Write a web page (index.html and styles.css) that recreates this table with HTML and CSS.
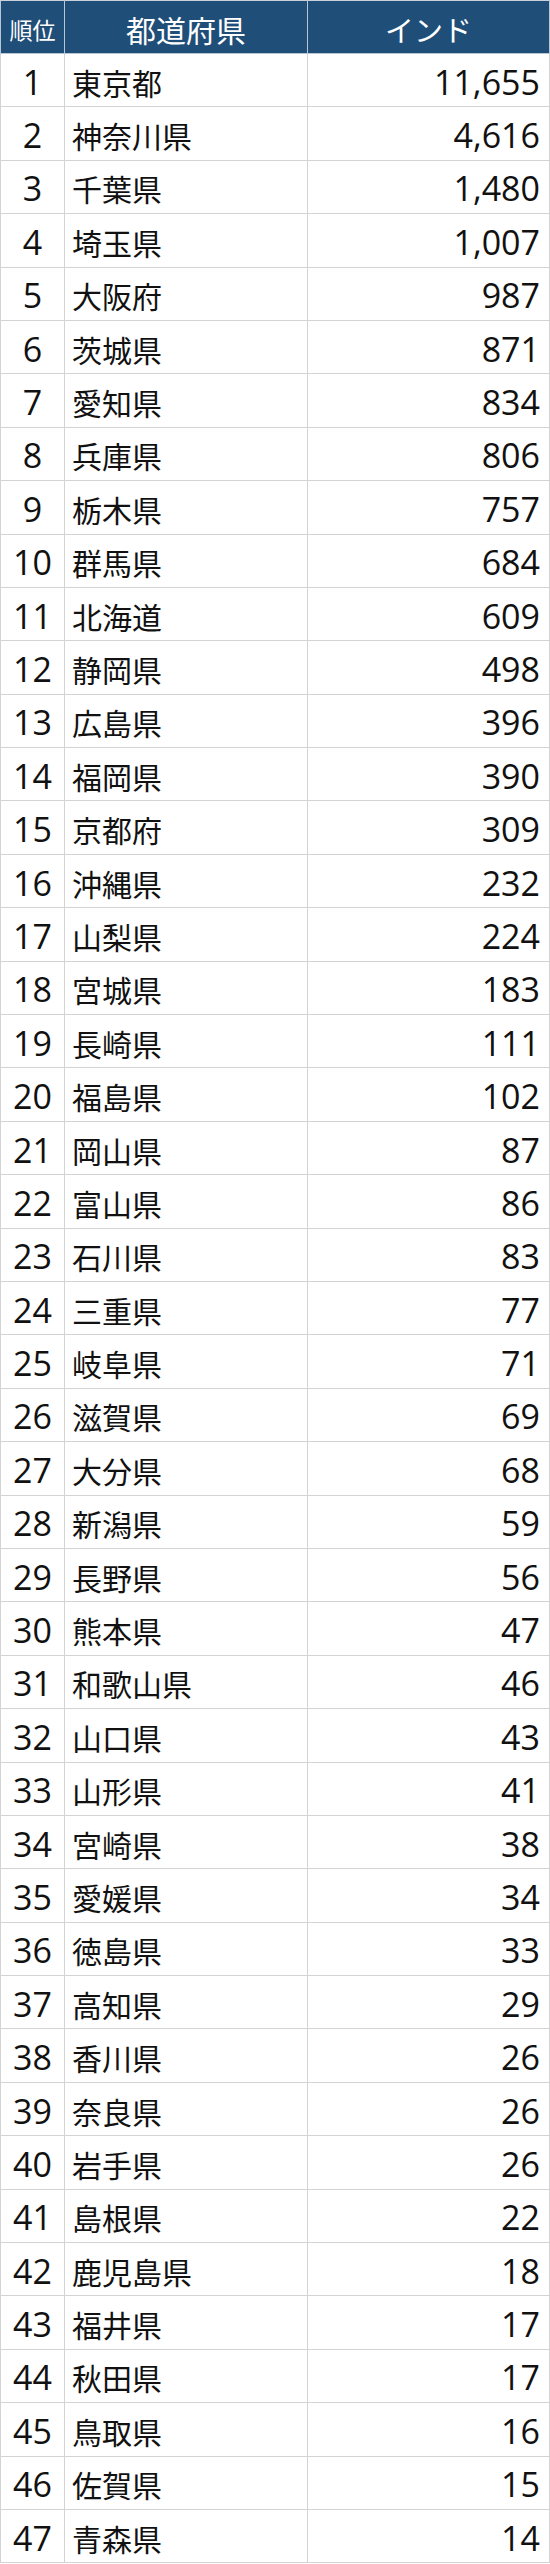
FILE: index.html
```html
<!DOCTYPE html>
<html lang="ja">
<head>
<meta charset="utf-8">
<title>順位表</title>
<link rel="stylesheet" href="styles.css">
</head>
<body>
<table class="rank-table">
<colgroup><col class="c-rank"><col class="c-name"><col class="c-num"></colgroup>
<thead>
<tr><th class="h-rank">順位</th><th class="h-name">都道府県</th><th class="h-num">インド</th></tr>
</thead>
<tbody>
<tr><td class="rank">1</td><td class="name">東京都</td><td class="num">11,655</td></tr>
<tr><td class="rank">2</td><td class="name">神奈川県</td><td class="num">4,616</td></tr>
<tr><td class="rank">3</td><td class="name">千葉県</td><td class="num">1,480</td></tr>
<tr><td class="rank">4</td><td class="name">埼玉県</td><td class="num">1,007</td></tr>
<tr><td class="rank">5</td><td class="name">大阪府</td><td class="num">987</td></tr>
<tr><td class="rank">6</td><td class="name">茨城県</td><td class="num">871</td></tr>
<tr><td class="rank">7</td><td class="name">愛知県</td><td class="num">834</td></tr>
<tr><td class="rank">8</td><td class="name">兵庫県</td><td class="num">806</td></tr>
<tr><td class="rank">9</td><td class="name">栃木県</td><td class="num">757</td></tr>
<tr><td class="rank">10</td><td class="name">群馬県</td><td class="num">684</td></tr>
<tr><td class="rank">11</td><td class="name">北海道</td><td class="num">609</td></tr>
<tr><td class="rank">12</td><td class="name">静岡県</td><td class="num">498</td></tr>
<tr><td class="rank">13</td><td class="name">広島県</td><td class="num">396</td></tr>
<tr><td class="rank">14</td><td class="name">福岡県</td><td class="num">390</td></tr>
<tr><td class="rank">15</td><td class="name">京都府</td><td class="num">309</td></tr>
<tr><td class="rank">16</td><td class="name">沖縄県</td><td class="num">232</td></tr>
<tr><td class="rank">17</td><td class="name">山梨県</td><td class="num">224</td></tr>
<tr><td class="rank">18</td><td class="name">宮城県</td><td class="num">183</td></tr>
<tr><td class="rank">19</td><td class="name">長崎県</td><td class="num">111</td></tr>
<tr><td class="rank">20</td><td class="name">福島県</td><td class="num">102</td></tr>
<tr><td class="rank">21</td><td class="name">岡山県</td><td class="num">87</td></tr>
<tr><td class="rank">22</td><td class="name">富山県</td><td class="num">86</td></tr>
<tr><td class="rank">23</td><td class="name">石川県</td><td class="num">83</td></tr>
<tr><td class="rank">24</td><td class="name">三重県</td><td class="num">77</td></tr>
<tr><td class="rank">25</td><td class="name">岐阜県</td><td class="num">71</td></tr>
<tr><td class="rank">26</td><td class="name">滋賀県</td><td class="num">69</td></tr>
<tr><td class="rank">27</td><td class="name">大分県</td><td class="num">68</td></tr>
<tr><td class="rank">28</td><td class="name">新潟県</td><td class="num">59</td></tr>
<tr><td class="rank">29</td><td class="name">長野県</td><td class="num">56</td></tr>
<tr><td class="rank">30</td><td class="name">熊本県</td><td class="num">47</td></tr>
<tr><td class="rank">31</td><td class="name">和歌山県</td><td class="num">46</td></tr>
<tr><td class="rank">32</td><td class="name">山口県</td><td class="num">43</td></tr>
<tr><td class="rank">33</td><td class="name">山形県</td><td class="num">41</td></tr>
<tr><td class="rank">34</td><td class="name">宮崎県</td><td class="num">38</td></tr>
<tr><td class="rank">35</td><td class="name">愛媛県</td><td class="num">34</td></tr>
<tr><td class="rank">36</td><td class="name">徳島県</td><td class="num">33</td></tr>
<tr><td class="rank">37</td><td class="name">高知県</td><td class="num">29</td></tr>
<tr><td class="rank">38</td><td class="name">香川県</td><td class="num">26</td></tr>
<tr><td class="rank">39</td><td class="name">奈良県</td><td class="num">26</td></tr>
<tr><td class="rank">40</td><td class="name">岩手県</td><td class="num">26</td></tr>
<tr><td class="rank">41</td><td class="name">島根県</td><td class="num">22</td></tr>
<tr><td class="rank">42</td><td class="name">鹿児島県</td><td class="num">18</td></tr>
<tr><td class="rank">43</td><td class="name">福井県</td><td class="num">17</td></tr>
<tr><td class="rank">44</td><td class="name">秋田県</td><td class="num">17</td></tr>
<tr><td class="rank">45</td><td class="name">鳥取県</td><td class="num">16</td></tr>
<tr><td class="rank">46</td><td class="name">佐賀県</td><td class="num">15</td></tr>
<tr><td class="rank">47</td><td class="name">青森県</td><td class="num">14</td></tr>
</tbody>
</table>
</body>
</html>
```

FILE: styles.css
```css
html, body {
  margin: 0;
  padding: 0;
  background: #ffffff;
}

.rank-table {
  border-collapse: collapse;
  table-layout: fixed;
  width: 549px;
  color: #111111;
  font-family: "Open Sans", "Noto Sans CJK JP", sans-serif;
}

.c-rank { width: 64px; }
.c-name { width: 243px; }
.c-num { width: 242px; }

.rank-table th {
  background: #1f4e78;
  color: #ffffff;
  font-family: "Noto Sans CJK JP", sans-serif;
  font-weight: normal;
  height: 53px;
  padding: 4px 0 0 0;
  text-align: center;
  vertical-align: middle;
  border: 1px solid #b9c6d3;
  border-top-color: #c9d2dc;
  box-sizing: border-box;
  line-height: 1;
}

.h-rank { font-size: 23px; }
.h-name { font-size: 30px; }
.h-num { font-size: 29px; }

.rank-table td {
  height: 53.4px;
  box-sizing: border-box;
  border: 1px solid #d3d3d3;
  padding: 3px 0 0 0;
  vertical-align: middle;
  line-height: 1;
  white-space: nowrap;
}

.rank {
  text-align: center;
  font-size: 34px;
}

.name {
  padding-left: 7px !important;
  font-family: "Noto Sans CJK JP", sans-serif;
  font-size: 30px;
}

.num {
  text-align: right;
  padding-right: 9px !important;
  font-size: 34px;
}
```
